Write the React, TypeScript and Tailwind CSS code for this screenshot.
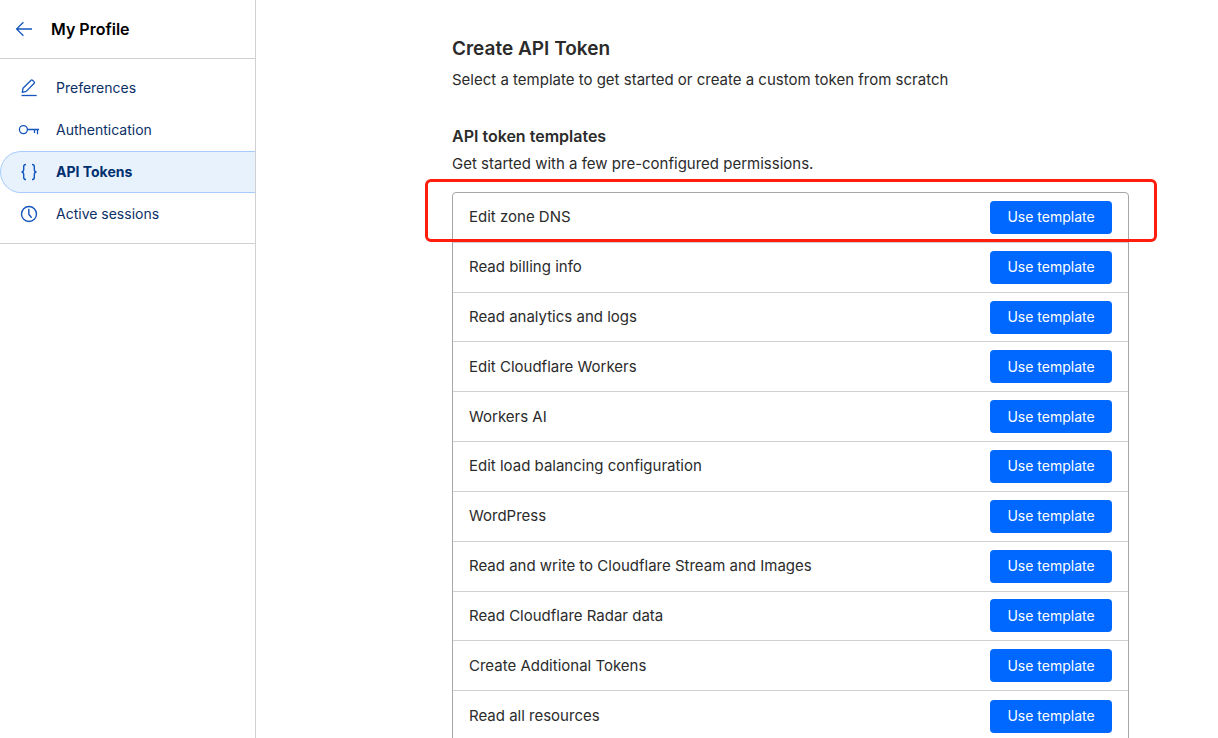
import type { ReactNode } from 'react';

type NavItem = { label: string; icon: ReactNode; active?: boolean };

const iconProps = {
  fill: 'none',
  stroke: 'currentColor',
  'aria-hidden': true,
} as const;

function ArrowLeftIcon() {
  return (
    <svg {...iconProps} width="18" height="18" viewBox="0 0 18 18" strokeWidth="1.3">
      <path d="M17 9H1.6M8.4 2.2 1.6 9l6.8 6.8" />
    </svg>
  );
}

function PencilIcon() {
  return (
    <svg {...iconProps} width="20" height="20" viewBox="0 0 20 20" strokeWidth="1.3">
      <path d="M2.5 17.5h15.2" />
      <path
        d="m3.300 14.400.7-4.200 8.100-8c.4-.4 1-.4 1.400 0l1.700 1.700c.4.4.4 1 0 1.400l-8 8.100-3.900 1Z"
        strokeLinejoin="round"
      />
    </svg>
  );
}

function KeyIcon() {
  return (
    <svg {...iconProps} width="22" height="20" viewBox="0 0 22 20" strokeWidth="1.3">
      <circle cx="5.400" cy="9.600" r="4" />
      <path d="M9.400 9.500H21M19.500 9.500v4.700M16.500 9.500v3.500" />
    </svg>
  );
}

function BracesIcon() {
  return (
    <svg {...iconProps} width="20" height="20" viewBox="0 0 20 20" strokeWidth="1.4">
      <path d="M7 2.500C5.200 2.500 4.700 3.200 4.700 4.600v2.700c0 1.600-.6 2.700-2.200 2.700 1.600 0 2.200 1.100 2.200 2.700v2.700c0 1.400.5 2.100 2.300 2.100" />
      <path d="M13 2.500c1.800 0 2.300.7 2.300 2.100v2.700c0 1.600.6 2.700 2.200 2.700-1.600 0-2.200 1.100-2.200 2.700v2.700c0 1.400-.5 2.100-2.300 2.100" />
    </svg>
  );
}

function ClockIcon() {
  return (
    <svg {...iconProps} width="20" height="20" viewBox="0 0 20 20" strokeWidth="1.4">
      <circle cx="10" cy="10" r="7.500" />
      <path d="M9.800 4.800v5.400l2.800 3.600" />
    </svg>
  );
}

const navItems: NavItem[] = [
  { label: 'Preferences', icon: <PencilIcon /> },
  { label: 'Authentication', icon: <KeyIcon /> },
  { label: 'API Tokens', icon: <BracesIcon />, active: true },
  { label: 'Active sessions', icon: <ClockIcon /> },
];

const templates = [
  'Edit zone DNS',
  'Read billing info',
  'Read analytics and logs',
  'Edit Cloudflare Workers',
  'Workers AI',
  'Edit load balancing configuration',
  'WordPress',
  'Read and write to Cloudflare Stream and Images',
  'Read Cloudflare Radar data',
  'Create Additional Tokens',
  'Read all resources',
];

function Sidebar() {
  return (
    <aside className="w-64 shrink-0 border-r border-[#d0d0d0]">
      <header className="flex h-[59px] items-center gap-[18px] border-b border-[#d0d0d0] pl-[15px]">
        <a href="#back" aria-label="Back" className="text-[#1556bd]">
          <ArrowLeftIcon />
        </a>
        <h2 className="text-base font-semibold text-black">My Profile</h2>
      </header>
      <nav aria-label="Profile" className="border-b border-[#d0d0d0] py-2">
        <ul>
          {navItems.map(({ label, icon, active }) => (
            <li key={label}>
              <a
                href="#nav"
                aria-current={active ? 'page' : undefined}
                className={
                  active
                    ? 'flex h-[42px] items-center rounded-l-full border border-r-0 border-[#a9cdfb] bg-[#e8f2fd] pl-[17px] text-sm font-bold text-[#003070]'
                    : 'flex h-[42px] items-center pl-[18px] text-sm text-[#0b2f66]'
                }
              >
                <span className="mr-4 flex w-[22px] justify-center text-[#1556bd]">{icon}</span>
                {label}
              </a>
            </li>
          ))}
        </ul>
      </nav>
    </aside>
  );
}

export default function App() {
  return (
    <div className="flex h-screen bg-white font-['Inter',sans-serif] text-[#2b2b2b]">
      <Sidebar />
      <main className="min-w-0 flex-1 overflow-y-auto pt-[35px] pr-[89px] pl-[196px] [scrollbar-width:none]">
        <h1 className="text-[19px] leading-7 font-semibold">Create API Token</h1>
        <p className="mt-[5px] text-[15px] leading-6">
          Select a template to get started or create a custom token from scratch
        </p>
        <h2 className="mt-8 text-base font-semibold">API token templates</h2>
        <p className="mt-1 text-[15px] leading-6">Get started with a few pre-configured permissions.</p>
        <ul className="mt-4 grid min-h-[550px] auto-rows-fr rounded-sm border border-[#a6a6a6]">
          {templates.map((name, index) => (
            <li
              key={name}
              className="relative flex items-center justify-between border-b border-[#d0d0d0] px-4 last:border-b-0"
            >
              <span className="text-[15px] leading-6">{name}</span>
              <button
                type="button"
                className="h-[33px] min-w-[122px] rounded bg-[#0068ff] px-4 text-sm text-white"
              >
                Use template
              </button>
              {index === 0 && (
                <span
                  aria-hidden
                  className="pointer-events-none absolute -top-[14px] -right-[29px] bottom-0 -left-[28px] z-10 rounded-md border-3 border-[#ff1d0d]"
                />
              )}
            </li>
          ))}
        </ul>
      </main>
    </div>
  );
}
